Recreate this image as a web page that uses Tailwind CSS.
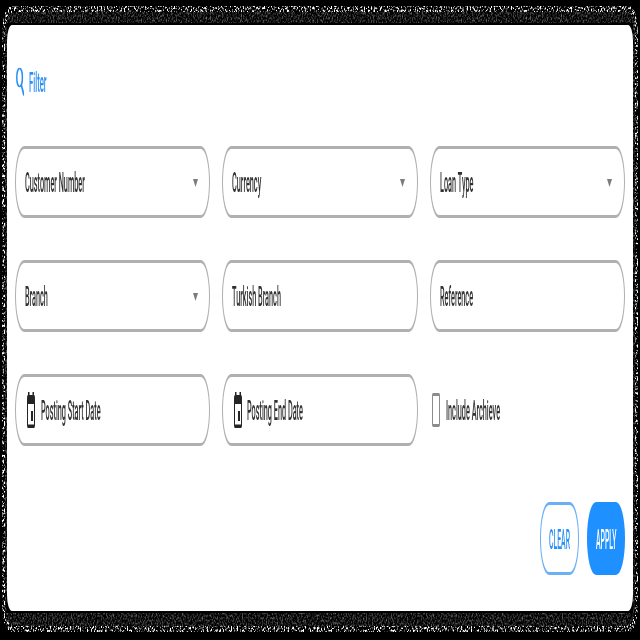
<!DOCTYPE html>
<html lang="en">
<head>
<meta charset="utf-8">
<title>Filter</title>
<script src="https://cdn.jsdelivr.net/npm/@tailwindcss/browser@4"></script>
</head>
<body class="w-[640px] h-[640px] overflow-hidden bg-black">
<div class="relative w-[640px] h-[640px] overflow-hidden bg-black pt-[25px] pl-[7px] font-['Roboto','Liberation_Sans',sans-serif] text-[27px] leading-8 text-[#303030]">
  <!-- grainy edge around the card -->
  <svg class="absolute inset-0" width="640" height="640" viewBox="0 0 640 640">
    <defs>
      <filter id="strong" x="0" y="0" width="640" height="640" filterUnits="userSpaceOnUse" color-interpolation-filters="sRGB">
        <feTurbulence type="fractalNoise" baseFrequency="0.7 0.4" numOctaves="2" seed="4"/>
        <feColorMatrix values="5 0 0 0 -2.45  5 0 0 0 -2.45  5 0 0 0 -2.45  0 0 0 0 1"/>
        <feComposite in2="SourceGraphic" operator="in"/>
      </filter>
      <filter id="weak" x="0" y="0" width="640" height="640" filterUnits="userSpaceOnUse" color-interpolation-filters="sRGB">
        <feTurbulence type="fractalNoise" baseFrequency="0.8 0.4" numOctaves="2" seed="9"/>
        <feColorMatrix values="1 0 0 0 -0.42  1 0 0 0 -0.42  1 0 0 0 -0.42  0 0 0 0 1"/>
        <feComposite in2="SourceGraphic" operator="in"/>
      </filter>
    </defs>
    <path filter="url(#weak)" fill="#fff" fill-rule="evenodd" d="M12 8H628Q637 8 637 40V602Q637 632 628 632H12Q3 632 3 602V40Q3 8 12 8ZM7 23V613H633V23Z"/>
    <path filter="url(#strong)" fill="#fff" fill-rule="evenodd" d="M12 6H628Q638 6 638 40V600Q638 632 628 632H12Q2 632 2 600V40Q2 6 12 6ZM14 12Q5 12 5 40V600Q5 626 14 626H626Q635 626 635 600V40Q635 12 626 12Z"/>
  </svg>

  <main class="relative w-[626px] h-[586px] bg-white rounded-[5px/16px] pt-[41px] pl-2 pr-2 flex flex-col">
    <header class="flex items-center h-8 text-[#2b90f5]">
      <svg class="w-[9px] h-8 shrink-0" viewBox="0 0 9 32" fill="none" stroke="currentColor"><ellipse cx="4.6" cy="11.5" rx="2.8" ry="9" stroke-width="1.5"/><path d="M6.3 19L9 29.500" stroke-width="1.7"/></svg>
      <span class="ml-[5px] mt-0.5 w-5 whitespace-nowrap font-medium origin-left scale-x-[.285]">Filter</span>
    </header>

    <section class="mt-12 grid grid-cols-3 gap-x-3 gap-y-[42px] w-[610px]">
      <div class="h-[72px] rounded-[9px/36px] border-x border-y-[3px] border-[#b0b0b0] flex items-center px-[9px]">
        <span class="mt-0.5 w-[160px] whitespace-nowrap font-medium origin-left scale-x-[.27]">Customer Number</span>
        <svg class="ml-auto mt-0.5 mr-[2.5px] w-[5px] h-2" viewBox="0 0 5 8"><path d="M0 0H5L2.5 8Z" fill="#7c7c7c"/></svg>
      </div>
      <div class="h-[72px] rounded-[9px/36px] border-x border-y-[3px] border-[#b0b0b0] flex items-center px-[9px]">
        <span class="mt-0.5 w-[160px] whitespace-nowrap font-medium origin-left scale-x-[.27]">Currency</span>
        <svg class="ml-auto mt-0.5 mr-[3px] w-[5px] h-2" viewBox="0 0 5 8"><path d="M0 0H5L2.5 8Z" fill="#7c7c7c"/></svg>
      </div>
      <div class="h-[72px] rounded-[9px/36px] border-x border-y-[3px] border-[#b0b0b0] flex items-center px-[9px]">
        <span class="mt-0.5 w-[160px] whitespace-nowrap font-medium origin-left scale-x-[.27]">Loan Type</span>
        <svg class="ml-auto mt-0.5 mr-[3px] w-[5px] h-2" viewBox="0 0 5 8"><path d="M0 0H5L2.5 8Z" fill="#7c7c7c"/></svg>
      </div>
      <div class="h-[72px] rounded-[9px/36px] border-x border-y-[3px] border-[#b0b0b0] flex items-center px-[9px]">
        <span class="mt-0.5 w-[160px] whitespace-nowrap font-medium origin-left scale-x-[.27]">Branch</span>
        <svg class="ml-auto mt-0.5 mr-[2.5px] w-[5px] h-2" viewBox="0 0 5 8"><path d="M0 0H5L2.5 8Z" fill="#7c7c7c"/></svg>
      </div>
      <div class="h-[72px] rounded-[9px/36px] border-x border-y-[3px] border-[#b0b0b0] flex items-center px-[9px]">
        <span class="mt-0.5 w-[160px] whitespace-nowrap font-medium origin-left scale-x-[.27]">Turkish Branch</span>
      </div>
      <div class="h-[72px] rounded-[9px/36px] border-x border-y-[3px] border-[#b0b0b0] flex items-center px-[9px]">
        <span class="mt-0.5 w-[160px] whitespace-nowrap font-medium origin-left scale-x-[.27]">Reference</span>
      </div>
      <div class="h-[72px] rounded-[9px/36px] border-x border-y-[3px] border-[#b0b0b0] flex items-center pl-[11px]">
        <svg class="w-2 h-[38px] shrink-0" viewBox="0 0 8 38"><path fill="#252525" fill-rule="evenodd" d="M1 1H2.500V4H5.500V1H7V4Q8 4 8 8V33Q8 37 7 37H1Q0 37 0 33V8Q0 4 1 4ZM1 13V33.500H7V13ZM4 20H6V30H4Z"/></svg>
        <span class="mt-0.5 ml-[5.5px] w-[150px] whitespace-nowrap font-medium origin-left scale-x-[.27]">Posting Start Date</span>
      </div>
      <div class="h-[72px] rounded-[9px/36px] border-x border-y-[3px] border-[#b0b0b0] flex items-center pl-[10.5px]">
        <svg class="w-2 h-[38px] shrink-0" viewBox="0 0 8 38"><path fill="#252525" fill-rule="evenodd" d="M1 1H2.500V4H5.500V1H7V4Q8 4 8 8V33Q8 37 7 37H1Q0 37 0 33V8Q0 4 1 4ZM1 13V33.500H7V13ZM4 20H6V30H4Z"/></svg>
        <span class="mt-0.5 ml-[5.5px] w-[150px] whitespace-nowrap font-medium origin-left scale-x-[.27]">Posting End Date</span>
      </div>
      <label class="h-[72px] flex items-center pl-[2px]">
        <span class="w-2 h-[34px] rounded-[1px/3px] border-x border-y-[3px] border-[#8c8c8c]"></span>
        <span class="mt-0.5 ml-[6px] w-[150px] whitespace-nowrap font-medium origin-left scale-x-[.27]">Include Archieve</span>
      </label>
    </section>

    <footer class="mt-[56px] flex justify-end gap-2">
      <button class="w-[39px] h-[73px] rounded-[9px/36px] border-x border-y-[3px] border-[#6bb0f5] text-[#2b90f5] flex items-center pl-[7.5px]"><span class="mt-0.5 w-5 whitespace-nowrap font-medium origin-left scale-x-[.255]">CLEAR</span></button>
      <button class="w-[38px] h-[73px] rounded-[9px/36px] bg-[#1e90ff] text-white flex items-center pl-[8.5px]"><span class="mt-0.5 w-5 whitespace-nowrap font-medium origin-left scale-x-[.255] text-left">APPLY</span></button>
    </footer>
  </main>
</div>
</body>
</html>
